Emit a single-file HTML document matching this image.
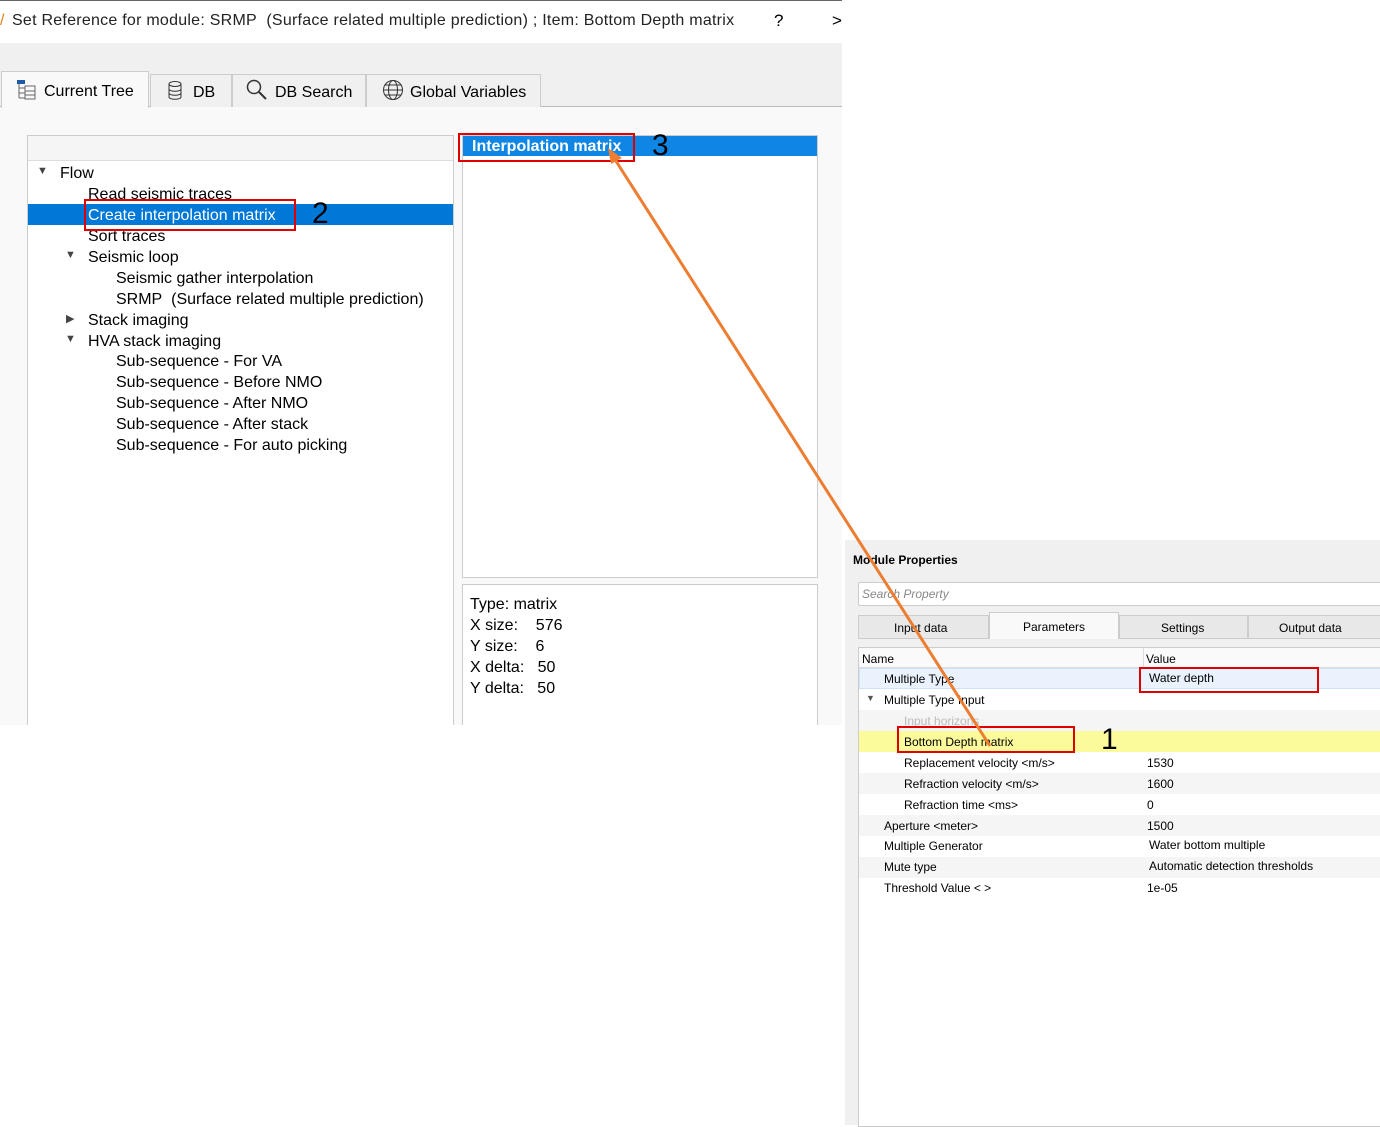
<!DOCTYPE html>
<html><head><meta charset="utf-8"><style>
*{margin:0;padding:0;box-sizing:border-box}
body{width:1380px;height:1125px;background:#fff;position:relative;overflow:hidden;font-family:"Liberation Sans","DejaVu Sans",sans-serif;color:#000}
.a{position:absolute}
.t{position:absolute;white-space:nowrap}
.tree .t{font-size:16px;margin-top:1px}
.rp .t{font-size:12px}
</style></head><body>
<div class="a" style="left:0;top:0;width:842px;height:725px;background:#f9f9f9"></div>
<div class="a" style="left:0;top:0;width:842px;height:43px;background:#fff;border-top:1px solid #666"></div>
<div class="t" style="left:0;top:12px;font-size:16px;color:#e08020">/</div>
<div class="t" style="left:12px;top:12px;font-size:16px;color:#222;letter-spacing:0.25px">Set Reference for module: SRMP&nbsp; (Surface related multiple prediction) ; Item: Bottom Depth matrix</div>
<div class="t" style="left:774px;top:11px;font-size:17px">?</div>
<div class="t" style="left:832px;top:11px;font-size:17px">&gt;</div>
<div class="a" style="left:0;top:43px;width:842px;height:64px;background:#f0f0f0;border-bottom:1px solid #bbb"></div>
<div class="a" style="left:1px;top:71px;width:148px;height:37px;background:#f9f9f9;border:1px solid #ccc;border-bottom:none"></div>
<svg class="a" style="left:16px;top:79px" width="22" height="22"><rect x="1" y="1" width="8" height="4" fill="#1e5aa8"/><path d="M3 5v14M3 9h6M3 14h6M3 19h6M9 7h10v5H9zM9 12h10v4H9zM9 16h10v4H9z" stroke="#666" fill="none"/></svg>
<div class="t" style="left:44px;top:83px;font-size:16px">Current Tree</div>
<div class="a" style="left:150px;top:74px;width:82px;height:33px;background:#f0f0f0;border:1px solid #ccc;border-bottom:none"></div>
<svg class="a" style="left:167px;top:81px" width="16" height="20"><ellipse cx="8" cy="3" rx="6" ry="2.5" fill="none" stroke="#333"/><path d="M2 3v13c0 3 12 3 12 0V3M2 8c0 3 12 3 12 0M2 12c0 3 12 3 12 0" fill="none" stroke="#333"/></svg>
<div class="t" style="left:193px;top:84px;font-size:16px">DB</div>
<div class="a" style="left:232px;top:74px;width:134px;height:33px;background:#f0f0f0;border:1px solid #ccc;border-bottom:none"></div>
<svg class="a" style="left:246px;top:79px" width="22" height="22"><circle cx="8" cy="8" r="6.5" fill="none" stroke="#333" stroke-width="1.5"/><path d="M13 13l7 7" stroke="#333" stroke-width="2"/></svg>
<div class="t" style="left:275px;top:84px;font-size:16px">DB Search</div>
<div class="a" style="left:366px;top:74px;width:175px;height:33px;background:#f0f0f0;border:1px solid #ccc;border-bottom:none"></div>
<svg class="a" style="left:382px;top:79px" width="22" height="22"><circle cx="11" cy="11" r="9.5" fill="none" stroke="#333"/><ellipse cx="11" cy="11" rx="4.5" ry="9.5" fill="none" stroke="#333"/><path d="M1.5 11h19M3 6h16M3 16h16" stroke="#333" fill="none"/></svg>
<div class="t" style="left:410px;top:84px;font-size:16px">Global Variables</div>
<div class="a" style="left:27px;top:135px;width:427px;height:600px;background:#fff;border:1px solid #ccc"></div>
<div class="a" style="left:28px;top:136px;width:425px;height:25px;background:#f5f5f5;border-bottom:1px solid #ddd"></div>
<div class="a" style="left:28px;top:204px;width:425px;height:21px;background:#0078d7"></div>
<div class="tree">
<div class="t" style="left:37px;top:164px;font-size:11px;color:#444">▼</div>
<div class="t" style="left:60px;top:164px">Flow</div>
<div class="t" style="left:88px;top:185px">Read seismic traces</div>
<div class="t" style="left:88px;top:206px;color:#fff">Create interpolation matrix</div>
<div class="t" style="left:88px;top:227px">Sort traces</div>
<div class="t" style="left:65px;top:248px;font-size:11px;color:#444">▼</div>
<div class="t" style="left:88px;top:248px">Seismic loop</div>
<div class="t" style="left:116px;top:269px">Seismic gather interpolation</div>
<div class="t" style="left:116px;top:290px">SRMP&nbsp; (Surface related multiple prediction)</div>
<div class="t" style="left:66px;top:311px;font-size:11px;color:#444">▶</div>
<div class="t" style="left:88px;top:311px">Stack imaging</div>
<div class="t" style="left:65px;top:332px;font-size:11px;color:#444">▼</div>
<div class="t" style="left:88px;top:332px">HVA stack imaging</div>
<div class="t" style="left:116px;top:352px">Sub-sequence - For VA</div>
<div class="t" style="left:116px;top:373px">Sub-sequence - Before NMO</div>
<div class="t" style="left:116px;top:394px">Sub-sequence - After NMO</div>
<div class="t" style="left:116px;top:415px">Sub-sequence - After stack</div>
<div class="t" style="left:116px;top:436px">Sub-sequence - For auto picking</div>
</div>
<div class="a" style="left:84px;top:199px;width:212px;height:32px;border:2px solid #e00000"></div>
<div class="t" style="left:312px;top:197px;font-size:30px">2</div>
<div class="a" style="left:462px;top:135px;width:356px;height:443px;background:#fff;border:1px solid #ccc"></div>
<div class="a" style="left:463px;top:136px;width:354px;height:20px;background:#0f86e4"></div>
<div class="t" style="left:472px;top:138px;font-size:16px;font-weight:bold;color:#fff">Interpolation matrix</div>
<div class="a" style="left:458px;top:133px;width:177px;height:29px;border:2px solid #e00000"></div>
<div class="t" style="left:652px;top:129px;font-size:30px">3</div>
<div class="a" style="left:462px;top:584px;width:356px;height:150px;background:#fff;border:1px solid #ccc"></div>
<div class="t" style="left:470px;top:594px;font-size:16px;line-height:21px">Type: matrix<br>X size:&nbsp;&nbsp;&nbsp; 576<br>Y size:&nbsp;&nbsp;&nbsp; 6<br>X delta:&nbsp;&nbsp; 50<br>Y delta:&nbsp;&nbsp; 50</div>
<div class="a" style="left:0;top:725px;width:845px;height:400px;background:#fff"></div>
<div class="a rp" style="left:845px;top:540px;width:535px;height:585px;background:#f0f0f0">
<div class="t" style="left:8px;top:13px;font-weight:bold;font-size:12px">Module Properties</div>
<div class="a" style="left:13px;top:42px;width:530px;height:24px;background:#fff;border:1px solid #ccc;border-radius:2px"></div>
<div class="t" style="left:17px;top:47px;font-style:italic;color:#888">Search Property</div>
<div class="a" style="left:13px;top:75px;width:131px;height:24px;background:#e8e8e8;border:1px solid #ccc"></div>
<div class="t" style="left:49px;top:81px">Input data</div>
<div class="a" style="left:144px;top:72px;width:130px;height:27px;background:#f9f9f9;border:1px solid #ccc;border-bottom:none"></div>
<div class="t" style="left:178px;top:80px">Parameters</div>
<div class="a" style="left:274px;top:75px;width:129px;height:24px;background:#e8e8e8;border:1px solid #ccc"></div>
<div class="t" style="left:316px;top:81px">Settings</div>
<div class="a" style="left:403px;top:75px;width:135px;height:24px;background:#e8e8e8;border:1px solid #ccc"></div>
<div class="t" style="left:434px;top:81px">Output data</div>
<div class="a" style="left:13px;top:107px;width:530px;height:480px;background:#fff;border:1px solid #ccc"></div>
<div class="a" style="left:14px;top:108px;width:530px;height:20px;background:#fafafa;border-bottom:1px solid #ddd"></div>
<div class="a" style="left:298px;top:108px;width:1px;height:20px;background:#ddd"></div>
<div class="t" style="left:17px;top:112px">Name</div>
<div class="t" style="left:301px;top:112px">Value</div>
<div class="a" style="left:14px;top:128px;width:530px;height:21px;background:#eaf3fd;border:1px solid #cde3f9"></div>
<div class="a" style="left:14px;top:170px;width:530px;height:21px;background:#f5f5f5"></div>
<div class="a" style="left:14px;top:191px;width:530px;height:21px;background:#fbfb9c"></div>
<div class="a" style="left:14px;top:233px;width:530px;height:21px;background:#f5f5f5"></div>
<div class="a" style="left:14px;top:275px;width:530px;height:21px;background:#f5f5f5"></div>
<div class="a" style="left:14px;top:317px;width:530px;height:21px;background:#f5f5f5"></div>
<div class="t" style="left:39px;top:132px">Multiple Type</div>
<div class="t" style="left:304px;top:131px">Water depth</div>
<div class="t" style="left:21px;top:153px;font-size:9px;color:#555">▼</div>
<div class="t" style="left:39px;top:153px">Multiple Type Input</div>
<div class="t" style="left:59px;top:174px;color:#bbb">Input horizons</div>
<div class="t" style="left:59px;top:195px">Bottom Depth matrix</div>
<div class="t" style="left:59px;top:216px">Replacement velocity &lt;m/s&gt;</div><div class="t" style="left:302px;top:216px">1530</div>
<div class="t" style="left:59px;top:237px">Refraction velocity &lt;m/s&gt;</div><div class="t" style="left:302px;top:237px">1600</div>
<div class="t" style="left:59px;top:258px">Refraction time &lt;ms&gt;</div><div class="t" style="left:302px;top:258px">0</div>
<div class="t" style="left:39px;top:279px">Aperture &lt;meter&gt;</div><div class="t" style="left:302px;top:279px">1500</div>
<div class="t" style="left:39px;top:299px">Multiple Generator</div><div class="t" style="left:304px;top:298px">Water bottom multiple</div>
<div class="t" style="left:39px;top:320px">Mute type</div><div class="t" style="left:304px;top:319px">Automatic detection thresholds</div>
<div class="t" style="left:39px;top:341px">Threshold Value &lt; &gt;</div><div class="t" style="left:302px;top:341px">1e-05</div>
<div class="a" style="left:294px;top:127px;width:180px;height:26px;border:2px solid #e00000"></div>
<div class="a" style="left:52px;top:186px;width:178px;height:27px;border:2px solid #e00000"></div>
<div class="t" style="left:256px;top:183px;font-size:30px">1</div>
</div>
<svg class="a" style="left:0;top:0" width="1380" height="1125">
<line x1="990" y1="746" x2="614" y2="158" stroke="#ed7d31" stroke-width="3"/>
<path d="M608 148 L622 158 L611 164 Z" fill="#ed7d31"/>
</svg>
</body></html>
